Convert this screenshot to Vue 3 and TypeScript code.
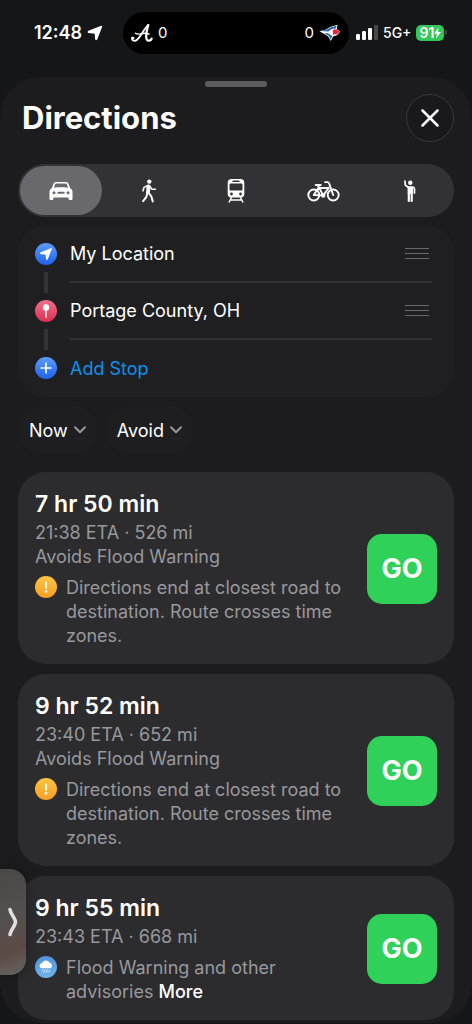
<script setup lang="ts">
import { ref } from 'vue'

type NoteKind = 'warning' | 'rain'

interface Route {
  id: number
  duration: string
  eta: string
  extra?: string
  kind: NoteKind
  note: string
  more?: boolean
}

interface Stop {
  id: string
  name: string
}

const modes = ['Drive', 'Walk', 'Transit', 'Cycle', 'Ride share']
const mode = ref('Drive')

const stops: Stop[] = [
  { id: 'origin', name: 'My Location' },
  { id: 'destination', name: 'Portage County, OH' },
]

const filters = ['Now', 'Avoid']

const endNote = 'Directions end at closest road to destination. Route crosses time zones.'

const routes: Route[] = [
  { id: 1, duration: '7 hr 50 min', eta: '21:38 ETA · 526 mi', extra: 'Avoids Flood Warning', kind: 'warning', note: endNote },
  { id: 2, duration: '9 hr 52 min', eta: '23:40 ETA · 652 mi', extra: 'Avoids Flood Warning', kind: 'warning', note: endNote },
  { id: 3, duration: '9 hr 55 min', eta: '23:43 ETA · 668 mi', kind: 'rain', note: 'Flood Warning and other advisories', more: true },
]
</script>

<template>
  <div class="screen">
    <svg class="defs" width="0" height="0" aria-hidden="true">
      <defs>
        <linearGradient id="g-blue" x1="0" y1="0" x2="0" y2="1">
          <stop offset="0" stop-color="#5b9cf8" /><stop offset="1" stop-color="#1f62ea" />
        </linearGradient>
        <linearGradient id="g-red" x1="0" y1="0" x2="0" y2="1">
          <stop offset="0" stop-color="#f0708f" /><stop offset="1" stop-color="#dc2f50" />
        </linearGradient>
        <linearGradient id="g-amber" x1="0" y1="0" x2="0" y2="1">
          <stop offset="0" stop-color="#fdc543" /><stop offset="1" stop-color="#f79e22" />
        </linearGradient>
        <linearGradient id="g-sky" x1="0" y1="0" x2="0" y2="1">
          <stop offset="0" stop-color="#4f94dc" /><stop offset="1" stop-color="#6fb4ea" />
        </linearGradient>
      </defs>
    </svg>

    <header class="status">
      <div class="clock">
        <span>12:48</span>
        <svg width="16" height="16" viewBox="0 0 16 16" aria-hidden="true">
          <path d="M14.500 1.500 9.700 14q-.5.900-.9 0L8.300 8 1.700 7.400q-.9-.4 0-.9z" fill="#fff" stroke="#fff" stroke-width="1.400" stroke-linejoin="round" />
        </svg>
      </div>
      <div class="island">
        <div class="team">
          <svg width="22" height="20" viewBox="0 0 22 20" fill="none" stroke="#fff" stroke-linecap="round" stroke-linejoin="round" aria-hidden="true">
            <path d="M1.200 14.600c-.5 2.400 1.300 3.800 3.400 3.100 4.200-1.500 7.400-11 12.600-15.600" stroke-width="1.900" />
            <path d="M17.200 2.100c-1.400 5-2.800 11-1.500 14.300.8 1.900 4.200 1.600 4.900-.8" stroke-width="2.300" />
            <path d="M4.500 10.200c1.700 1.500 3.500 1 5.500.6 3-.6 5.500-.9 8 .3" stroke-width="1.500" />
            <path d="M1.200 14.600c.9-.5 1.800.1 1.600 1.100" stroke-width="1.300" />
          </svg>
          <span>0</span>
        </div>
        <div class="team">
          <span>0</span>
          <svg width="22" height="18" viewBox="0 0 22 18" aria-hidden="true">
            <path d="M.5 7.300 7 5.500 11 3 18.500.8 17.800 5l3.200 2.400-2.500 3.600-4.300 1.400L11.800 17 9 12.200 4.500 9.600z" fill="#fff" />
            <path d="M1.500 7.100 7.500 5.700 11.500 3.400 17.600 1.700 17 4.300 12.500 5.200 9.500 7.600z" fill="#2f62b0" />
            <path d="M5 9 9 9.200 13.300 12 11.800 15.600 9.800 11.800z" fill="#2e5ca6" />
            <path d="M8.500 8.600 12.300 6 13.700 9.600 12.300 11.200z" fill="#fff" />
            <path d="M13.700 6.300 16 5.200 18 5.400 20.500 7.300 18.200 10.400 15.600 10.300 14.300 11.300z" fill="#e8253f" />
          </svg>
        </div>
      </div>
      <div class="radio">
        <svg width="22" height="15" viewBox="0 0 22 15" aria-hidden="true">
          <rect x="0" y="9" width="4" height="6" rx="1.200" fill="#fff" />
          <rect x="6" y="6" width="4" height="9" rx="1.200" fill="#fff" />
          <rect x="12" y="3" width="4" height="12" rx="1.200" fill="#fff" />
          <rect x="18" y="0" width="4" height="15" rx="1.200" fill="#48484b" />
        </svg>
        <span class="network">5G+</span>
        <span class="battery">
          <span class="level">91<svg width="7" height="12" viewBox="0 0 7 12" aria-hidden="true"><path d="M4.600.5 0 6.800h2.900L2 11.500 7 5H4z" fill="#fff" /></svg></span>
          <span class="nub"></span>
        </span>
      </div>
    </header>

    <main class="sheet">
      <div class="grabber"></div>
      <div class="heading">
        <h1>Directions</h1>
        <button class="close" type="button" aria-label="Close">
          <svg width="18" height="18" viewBox="0 0 18 18" aria-hidden="true">
            <path d="M1.500 1.500l15 15M16.500 1.500l-15 15" stroke="#fff" stroke-width="2.500" stroke-linecap="round" />
          </svg>
        </button>
      </div>

      <div class="modes" role="group" aria-label="Travel mode">
        <button
          v-for="m in modes"
          :key="m"
          type="button"
          class="mode"
          :class="{ active: m === mode }"
          :aria-label="m"
          :aria-pressed="m === mode"
          @click="mode = m"
        >
          <svg v-if="m === 'Drive'" width="24" height="20" viewBox="0 0 24 20" aria-hidden="true">
            <path fill="#fff" fill-rule="evenodd" d="M7.200 1h9.600c1.500 0 2.300.7 2.800 2l1.600 4.200c1.500.9 2.300 2 2.300 3.800v6.700c0 .8-.5 1.300-1.300 1.300h-1.300c-.8 0-1.300-.5-1.300-1.300V16.500H4.400v1.200c0 .8-.5 1.300-1.300 1.300H1.800C1 19 .5 18.500.5 17.700V11c0-1.800.8-2.900 2.300-3.800L4.400 3c.5-1.300 1.300-2 2.800-2zM7.400 2.600c-.8 0-1.100.3-1.400 1L4.900 6.700c4.500-.5 9.700-.5 14.200 0L18 3.600c-.3-.7-.6-1-1.400-1zM5 10.200a1.500 1.500 0 1 0 0 3 1.500 1.500 0 0 0 0-3zm14 0a1.500 1.500 0 1 0 0 3 1.500 1.500 0 0 0 0-3zM9.300 10.700a1 1 0 0 0 0 2h5.400a1 1 0 0 0 0-2z" />
          </svg>
          <svg v-else-if="m === 'Walk'" width="16" height="24" viewBox="0 0 16 24" fill="none" stroke="#fff" stroke-linecap="round" stroke-linejoin="round" aria-hidden="true">
            <circle cx="8.300" cy="2.600" r="2.200" fill="#fff" stroke="none" />
            <path d="M7.500 7.500 7 13.400" stroke-width="3.800" />
            <path d="M6.300 6.700 3 8.400 2 11.800" stroke-width="1.600" />
            <path d="M9 7.400l1.700 2.800h3.700" stroke-width="1.600" />
            <path d="M7.800 14.200l2.500 3.200 1.500 5" stroke-width="2" />
            <path d="M6.300 14.300 5.400 17.800l-3.300 4.300" stroke-width="2" />
          </svg>
          <svg v-else-if="m === 'Transit'" width="18" height="24" viewBox="0 0 18 24" aria-hidden="true">
            <path fill="#fff" fill-rule="evenodd" d="M4.500 0h9C16 .1 17.300 1.500 17.300 4v11c0 2-1.200 3.400-3.300 3.500H4C1.900 18.400.7 17 .7 15V4C.7 1.500 2 .1 4.500 0zM6 1.500a.7.7 0 0 0 0 1.500h6a.7.7 0 0 0 0-1.500zM3.800 4.500c-.8 0-1.300.4-1.300 1.200v4.600c0 .8.500 1.200 1.300 1.200h10.400c.8 0 1.300-.4 1.300-1.200V5.700c0-.8-.5-1.200-1.300-1.200zM4.500 13.600a1.400 1.400 0 1 0 0 2.800 1.400 1.400 0 0 0 0-2.800zm9 0a1.400 1.400 0 1 0 0 2.800 1.400 1.400 0 0 0 0-2.800z" />
            <path d="M4.500 18.500 2.200 23M13.500 18.500l2.300 4.500M3.600 21h10.800" stroke="#fff" stroke-width="1.500" stroke-linecap="round" />
          </svg>
          <svg v-else-if="m === 'Cycle'" width="33" height="22" viewBox="0 0 33 22" fill="none" stroke="#fff" stroke-width="1.900" stroke-linecap="round" stroke-linejoin="round" aria-hidden="true">
            <circle cx="6.800" cy="15" r="5.500" />
            <circle cx="26.200" cy="15" r="5.500" />
            <path d="M6.800 15 11.400 8h10.400L16.200 15.400zM16.200 15.400 10.600 5M8.700 5h5" />
            <path d="M26.200 15 22.400 4.300c-.4-1.200-.8-2.200-1.700-2.200h-2.600" />
            <circle cx="16.200" cy="15.400" r="1.300" fill="#fff" />
          </svg>
          <svg v-else width="14" height="24" viewBox="0 0 14 24" fill="none" stroke="#fff" stroke-linecap="round" stroke-linejoin="round" aria-hidden="true">
            <circle cx="7.300" cy="3.700" r="2.200" fill="#fff" stroke="none" />
            <path d="M1.900 2 2.400 6.400 5.300 8.300" stroke-width="1.700" />
            <path d="M5.600 8.300h3.400v5.500h-3.400z" fill="#fff" stroke-width="2" />
            <path d="M9.800 8.100c1.200.2 1.700.9 1.700 2v4" stroke-width="1.700" />
            <path d="M5.800 14v8M8.700 14v8" stroke-width="2.200" />
          </svg>
        </button>
      </div>

      <section class="stops" aria-label="Stops">
        <div v-for="s in stops" :key="s.id" class="stop">
          <div class="marker">
            <svg v-if="s.id === 'origin'" width="22" height="22" viewBox="0 0 22 22" aria-hidden="true">
              <circle cx="11" cy="11" r="11" fill="url(#g-blue)" />
              <path d="M16.500 5.500 12.200 16.400q-.4.500-.7 0L11 11.200 5.500 10.600q-.4-.4 0-.8z" fill="#fff" stroke="#fff" stroke-width="1" stroke-linejoin="round" />
            </svg>
            <svg v-else width="22" height="22" viewBox="0 0 22 22" aria-hidden="true">
              <circle cx="11" cy="11" r="11" fill="url(#g-red)" />
              <circle cx="11" cy="7.500" r="3.200" fill="#fff" />
              <path d="M11 9v8.300" stroke="#fff" stroke-width="1.400" stroke-linecap="round" />
            </svg>
            <span class="link"></span>
          </div>
          <div class="place">
            <span>{{ s.name }}</span>
            <button class="reorder" type="button" :aria-label="`Reorder ${s.name}`"><i></i><i></i><i></i></button>
          </div>
        </div>
        <div class="stop">
          <div class="marker">
            <svg width="22" height="22" viewBox="0 0 22 22" aria-hidden="true">
              <circle cx="11" cy="11" r="11" fill="url(#g-blue)" />
              <path d="M11 6.200v9.600M6.200 11h9.600" stroke="#fff" stroke-width="1.700" stroke-linecap="round" />
            </svg>
          </div>
          <button class="add" type="button">Add Stop</button>
        </div>
      </section>

      <div class="filters">
        <button v-for="f in filters" :key="f" type="button" class="filter">
          {{ f }}
          <svg width="12" height="8" viewBox="0 0 12 8" aria-hidden="true">
            <path d="M1 1.300l5 5 5-5" fill="none" stroke="#98989c" stroke-width="2" stroke-linecap="round" stroke-linejoin="round" />
          </svg>
        </button>
      </div>

      <section class="routes" aria-label="Routes">
        <article v-for="r in routes" :key="r.id" class="route">
          <div class="info">
            <h2>{{ r.duration }}</h2>
            <p>{{ r.eta }}</p>
            <p v-if="r.extra">{{ r.extra }}</p>
            <div class="note">
              <svg v-if="r.kind === 'warning'" width="22" height="22" viewBox="0 0 22 22" aria-hidden="true">
                <circle cx="11" cy="11" r="11" fill="url(#g-amber)" />
                <path d="M11 6.400v5.600" stroke="#fff" stroke-width="2" stroke-linecap="round" />
                <circle cx="11" cy="15.400" r="1.300" fill="#fff" />
              </svg>
              <svg v-else width="22" height="22" viewBox="0 0 22 22" aria-hidden="true">
                <circle cx="11" cy="11" r="11" fill="url(#g-sky)" />
                <path d="M7.300 12.300a2.500 2.500 0 0 1-.3-5 4 4 0 0 1 7.500-.5 2.800 2.800 0 0 1 .4 5.500z" fill="#fff" />
                <path d="M7.500 13.800l-.5.900M10 13.800l-1.300 2.600M12.500 13.800l-1.300 2.600M15 13.800l-1.300 2.200" stroke="#e4f1fc" stroke-width="1" stroke-linecap="round" />
              </svg>
              <p>{{ r.note }} <a v-if="r.more" href="#more">More</a></p>
            </div>
          </div>
          <button class="go" type="button" :aria-label="`Go, ${r.duration}`">GO</button>
        </article>
      </section>
    </main>

    <button class="drawer" type="button" aria-label="Show hidden window">
      <svg width="10" height="30" viewBox="0 0 10 30" aria-hidden="true">
        <path d="M2 2.500c.6 4.500 5.500 9 5.500 12.500S2.600 23 2 27.500" fill="none" stroke="#e2dfdf" stroke-width="3.600" stroke-linecap="round" stroke-linejoin="round" />
      </svg>
    </button>
  </div>
</template>

<style>
html,
body {
  background: #151618;
}
</style>

<style scoped>
.screen {
  position: relative;
  box-sizing: border-box;
  min-height: 100vh;
  overflow: hidden;
  color: #fff;
  font-family: Inter, "Liberation Sans", sans-serif;
  background: #151618;
}
.defs {
  position: absolute;
}
button {
  margin: 0;
  padding: 0;
  border: 0;
  color: inherit;
  font: inherit;
  background: none;
  cursor: pointer;
}
svg {
  display: block;
  flex: none;
}
h1,
h2,
p {
  margin: 0;
}

.status {
  display: grid;
  grid-template-columns: 1fr 226px 1fr;
  align-items: center;
  height: 65px;
  margin-bottom: 12px;
}
.clock {
  display: flex;
  align-items: center;
  justify-content: flex-end;
  gap: 5px;
  padding-right: 20px;
  font-size: 18px;
  font-weight: 600;
}
.island {
  display: flex;
  align-items: center;
  justify-content: space-between;
  box-sizing: border-box;
  height: 42px;
  padding: 0 8px;
  border-radius: 21px;
  background: #000;
}
.team {
  display: flex;
  align-items: center;
  gap: 5px;
  font-size: 15px;
}
.radio {
  display: flex;
  align-items: center;
  gap: 5px;
  padding-left: 7px;
}
.network {
  font-size: 14px;
  font-weight: 500;
}
.battery {
  display: flex;
  align-items: center;
  gap: 1px;
}
.level {
  display: flex;
  align-items: center;
  justify-content: center;
  width: 28px;
  height: 16px;
  border-radius: 5px;
  font-size: 14px;
  font-weight: 600;
  background: #34c759;
}
.nub {
  width: 2px;
  height: 5px;
  border-radius: 0 2px 2px 0;
  background: #4b4b4e;
}

.sheet {
  display: flex;
  flex-direction: column;
  padding: 4px 18px 3px;
  border-radius: 40px;
  background: #1c1c1e;
}
.grabber {
  align-self: center;
  width: 62px;
  height: 6px;
  border-radius: 3px;
  background: #5c5c60;
}
.heading {
  display: flex;
  align-items: center;
  justify-content: space-between;
  padding: 7px 0 0 4px;
}
h1 {
  font-size: 31px;
  line-height: 40px;
  font-weight: 700;
}
.close {
  display: grid;
  place-items: center;
  box-sizing: border-box;
  width: 48px;
  height: 48px;
  border: 1px solid #39393b;
  border-radius: 50%;
  background: #19191b;
}
.modes {
  display: grid;
  grid-template-columns: repeat(5, 1fr);
  box-sizing: border-box;
  height: 53px;
  margin-top: 22px;
  padding: 2px 0;
  border-radius: 27px;
  background: #323136;
}
.mode {
  display: grid;
  place-items: center;
  border-radius: 25px;
}
.mode.active {
  margin: 0 3px 0 2px;
  background: #69686d;
}

.stops {
  margin-top: 9px;
  padding: 0 22px 0 17px;
  border-radius: 26px;
  background: #1f1f21;
}
.stop {
  display: grid;
  grid-template-columns: 22px 1fr;
  grid-template-rows: 57px;
  column-gap: 13px;
}
.marker {
  display: flex;
  flex-direction: column;
  align-items: center;
  gap: 7px;
  padding-top: 17px;
}
.link {
  flex: none;
  width: 4px;
  height: 21px;
  background: #343437;
}
.place {
  display: flex;
  align-items: center;
  justify-content: space-between;
  padding-right: 3px;
  border-bottom: 2px solid #303033;
  font-size: 18px;
}
.reorder {
  display: flex;
  flex-direction: column;
  gap: 4px;
}
.reorder i {
  width: 24px;
  height: 1px;
  background: #68686b;
}
.add {
  text-align: left;
  font-size: 18px;
  color: #0d91f0;
}

.filters {
  display: flex;
  gap: 9px;
  margin-top: 9px;
}
.filter {
  display: flex;
  align-items: center;
  gap: 6px;
  height: 48px;
  padding: 0 11px;
  border-radius: 24px;
  font-size: 18px;
  background: #1e1e20;
}

.routes {
  display: flex;
  flex-direction: column;
  gap: 10px;
  margin-top: 18px;
}
.route {
  display: flex;
  align-items: center;
  justify-content: space-between;
  gap: 20px;
  padding: 17px 17px 16px;
  border-radius: 28px;
  background: #2c2c2e;
}
.info {
  flex: 1;
  color: #98989d;
  font-size: 18px;
  line-height: 24px;
}
h2 {
  margin-bottom: 2px;
  color: #fff;
  font-size: 23px;
  line-height: 30px;
  font-weight: 600;
}
.note {
  display: flex;
  gap: 9px;
  margin-top: 7px;
}
.note a {
  color: #fff;
  font-weight: 500;
  text-decoration: none;
}
.go {
  flex: none;
  width: 70px;
  height: 70px;
  border-radius: 15px;
  font-size: 27px;
  font-weight: 700;
  background: #30d158;
}

.drawer {
  position: absolute;
  left: 0;
  top: 869px;
  display: grid;
  place-items: center end;
  width: 26px;
  height: 106px;
  padding-right: 8px;
  border-radius: 0 16px 16px 0;
  background: linear-gradient(160deg, #4b4746 0%, #53504e 45%, #5d4a46 75%, #666563 100%);
  box-shadow: 0 0 14px rgba(0, 0, 0, 0.3);
}
</style>
